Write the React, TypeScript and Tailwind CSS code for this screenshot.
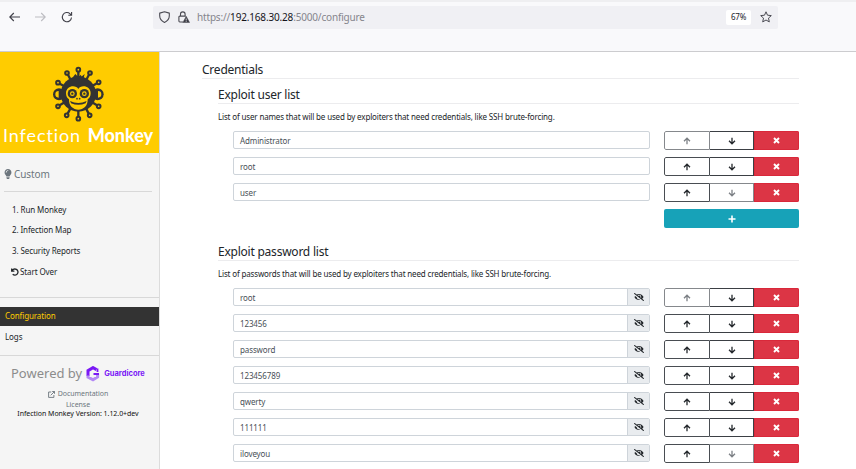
import type { ReactNode } from "react";
import { FaEyeSlash, FaLightbulb } from "react-icons/fa";

const users = ["Administrator", "root", "user"];
const passwords = ["root", "123456", "password", "123456789", "qwerty", "111111", "iloveyou"];

function Arrow({ down = false, dim = false }: { down?: boolean; dim?: boolean }) {
  return (
    <svg
      width="8"
      height="8"
      viewBox="0 0 8 8"
      fill="none"
      stroke={dim ? "#7b7f84" : "#23272b"}
      strokeWidth="1.3"
      className={down ? "rotate-180" : ""}
    >
      <path d="M4 7.3V1.2M1 4.2L4 1.2L7 4.2" />
    </svg>
  );
}

function RowButtons({ first, last }: { first: boolean; last: boolean }) {
  return (
    <div className="flex h-[19px] w-[135px] overflow-hidden rounded-[2px]">
      <div
        className={`flex w-[46px] items-center justify-center rounded-l-[2px] border ${first ? "border-[#85888c]" : "border-[#494d52]"}`}
      >
        <Arrow dim={first} />
      </div>
      <div
        className={`flex w-[44px] items-center justify-center border-y border-r ${last ? "border-[#85888c]" : "border-[#3b3f44]"}`}
      >
        <Arrow down dim={last} />
      </div>
      <div className="flex w-[45px] items-center justify-center border border-[#d9283a] bg-[#dc3545]">
        <svg width="7" height="7" viewBox="0 0 7 7" stroke="#fff" strokeWidth="1.9">
          <path d="M1 1L6 6M6 1L1 6" />
        </svg>
      </div>
    </div>
  );
}

function Row({ value, secret = false, first, last }: { value: string; secret?: boolean; first: boolean; last: boolean }) {
  return (
    <div className="flex h-[19px] justify-between">
      <div className="flex h-[18px] w-[417px] overflow-hidden rounded-[2px] border border-[#ced4da] bg-white">
        <div className="flex flex-1 items-center pt-px pl-[6px] text-[8px] tracking-[-0.12px] text-[#495057]">{value}</div>
        {secret && (
          <div className="flex w-[22px] items-center justify-center border-l border-[#ced4da] bg-[#e9ecef] text-[#212529]">
            <FaEyeSlash size={10} />
          </div>
        )}
      </div>
      <RowButtons first={first} last={last} />
    </div>
  );
}

function Heading({ children }: { children: ReactNode }) {
  return (
    <h2 className="h-[20px] border-b border-[#ececee] text-[12px] leading-[22px] tracking-[-0.23px] whitespace-nowrap text-[#212529]">
      {children}
    </h2>
  );
}

const spikes = [
  [85, 20],
  [51, 30],
  [120, 30],
  [24, 59],
  [146, 58],
  [24, 130],
  [146, 130],
  [50, 157],
  [119, 157],
  [85, 167],
];

function MonkeyLogo() {
  return (
    <svg width="60" height="60" viewBox="0 0 180 180" fill="#333333">
      <g stroke="#333333">
        {spikes.map(([x, y]) => (
          <g key={`${x}-${y}`}>
            <line x1={x} y1={y} x2="85" y2="93" strokeWidth="7" />
            <circle cx={x} cy={y} r="5.5" fill="#ffcc00" strokeWidth="6" />
          </g>
        ))}
      </g>
      <circle cx="27" cy="94" r="18" />
      <circle cx="143" cy="94" r="18" />
      <path d="M26 84a10 10 0 0 0 0 20zM144 84a10 10 0 0 1 0 20z" fill="#ffcc00" />
      <circle cx="85" cy="93" r="53" />
      <path d="M65 47L76 33L85 42L93 35L94 41L104 33L101 45z" />
      <path
        d="M85 78C79 65 48 66 48 91c0 9 4 14 9 18-1 20 13 31 28 31s29-11 28-31c5-4 9-9 9-18 0-25-31-26-37-13z"
        fill="#ffcc00"
      />
      <path d="M60 114q25 12 50 0-3 5-3 7-22 9-44 0 0-2-3-7z" />
      <circle cx="67" cy="92" r="14" />
      <circle cx="103" cy="92" r="14" />
      <circle cx="67" cy="92" r="7" fill="#ffcc00" />
      <circle cx="103" cy="92" r="7" fill="#ffcc00" />
      <circle cx="67" cy="92" r="3.5" />
      <circle cx="103" cy="92" r="3.5" />
      <circle cx="81" cy="107" r="2.5" />
      <circle cx="89" cy="107" r="2.5" />
    </svg>
  );
}

function BrowserBar() {
  return (
    <header className="h-[52px] border-t-2 border-b border-t-[#efeff1] border-b-[#cccccf] bg-[#f9f9fb]">
      <div className="flex h-[30px] items-center text-[#4a4a52]">
        <svg className="ml-[9px]" width="11" height="10" viewBox="0 0 11 10" fill="none" stroke="#3f3f48" strokeWidth="1.1">
          <path d="M11 5H.8M4.8 1L.8 5L4.8 9" />
        </svg>
        <svg className="ml-[15px]" width="11" height="10" viewBox="0 0 11 10" fill="none" stroke="#bdbdc2" strokeWidth="1.1">
          <path d="M0 5h10.2M6.2 1l4 4l-4 4" />
        </svg>
        <svg className="ml-[15px]" width="12" height="12" viewBox="0 0 12 12" fill="none" stroke="#3f3f48" strokeWidth="1.1">
          <path d="M10.5 6.5A4.6 4.6 0 1 1 9.1 2.8L10.4 4.2M10.6 1V4.3H7.3" />
        </svg>
        <div className="ml-[80px] flex h-[23px] w-[625px] items-center rounded-[2px] bg-[#f0f0f4]">
          <svg className="ml-[6px]" width="11" height="12" viewBox="0 0 11 12" fill="none" stroke="#4a4a52" strokeWidth="1.1">
            <path d="M5.5.7L10.3 2.1V4.8C10.3 8 8.2 10.2 5.5 11.4C2.8 10.2.7 8 .7 4.8V2.1z" strokeLinejoin="round" />
          </svg>
          <svg className="ml-[8px]" width="12" height="12" viewBox="0 0 12 12" fill="none" stroke="#4a4a52" strokeWidth="1.1">
            <path d="M2.5 5V3.2a2.3 2.3 0 0 1 4.6 0V5M5 11H1.8a.9.9 0 0 1-.9-.9V6a.9.9 0 0 1 .9-.9h6" />
            <path d="M8.2 5.3L11.6 11.5H4.9z" fill="#3b3b44" strokeWidth=".5" />
            <path d="M8.2 7.5v2M8.2 10v.8" stroke="#f0f0f4" strokeWidth=".8" />
          </svg>
          <div className="ml-[7px] pt-px text-[10px] tracking-[-0.17px] whitespace-nowrap text-[#85858c]">
            https://<span className="text-[#15141a]">192.168.30.28</span>:5000/configure
          </div>
          <div className="mr-[9px] ml-auto flex h-[15px] w-[25px] items-center justify-center rounded-[2px] bg-white text-[8px] tracking-[-0.2px] text-[#25252c]">
            67%
          </div>
          <svg className="mr-[6px]" width="12" height="12" viewBox="0 0 12 12" fill="none" stroke="#4a4a52" strokeLinejoin="round">
            <path d="M6 .8L7.5 4.2L11.3 4.6L8.5 7.1L9.3 10.9L6 9L2.7 10.9L3.5 7.1L.7 4.6L4.5 4.2z" />
          </svg>
        </div>
      </div>
    </header>
  );
}

function Sidebar() {
  return (
    <aside className="h-full w-[160px] shrink-0 border-r border-[#dcdcdc] bg-[#f5f5f5] text-[8px] tracking-[-0.1px] whitespace-nowrap text-[#212529]">
      <div className="flex h-[101px] flex-col bg-[#ffcc00] pt-[11px]">
        <div className="ml-[50px] h-[60px]">
          <MonkeyLogo />
        </div>
        <div className="mt-px ml-[3px] flex h-[23px] w-[150px] items-center justify-between font-[Lato,sans-serif] text-[18px] text-white">
          <span className="font-normal tracking-[0.05em]">Infection</span>
          <span className="font-black">Monkey</span>
        </div>
      </div>
      <div className="mr-[7px] ml-[4px] flex h-[39px] items-center border-b border-[#d8d8d8] pt-[4px] text-[10px] text-[#6c757d]">
        <FaLightbulb size={10} className="-ml-px" />
        <span className="ml-px">Custom</span>
      </div>
      <nav className="flex flex-col pt-[7px]">
        <div className="ml-[12px] h-[21px] leading-[21px]">1. Run Monkey</div>
        <div className="ml-[12px] h-[20px] leading-[20px]">2. Infection Map</div>
        <div className="ml-[12px] h-[21px] leading-[22px]">3. Security Reports</div>
        <div className="ml-[11px] flex h-[21px] items-center">
          <svg width="8" height="8" viewBox="0 0 8 8" fill="none" stroke="#212529" strokeWidth="1.3">
            <path d="M.7.5V3.2H3.4M1 3A3.1 3.1 0 1 1 1.7 6.3" />
          </svg>
          <span className="ml-px">Start Over</span>
        </div>
      </nav>
      <div className="mt-[15px] h-px bg-[#d8d8d8]" />
      <div className="mt-[9px] h-[19px] bg-[#333333] pl-[5px] leading-[18px] text-[#ffcc00]">Configuration</div>
      <div className="h-[30px] border-b border-[#d8d8d8] pl-[5px] leading-[22px]">Logs</div>
      <div className="mt-[9px] flex h-[18px] items-center pl-[11px]">
        <span className="text-[13px] tracking-normal text-[#8c8c8c]">Powered by</span>
        <svg className="ml-[4px]" width="14" height="16" viewBox="0 0 14 16" fill="none">
          <path d="M10.5 3.6L7 1.6L2 4.6V10" stroke="#7a18f5" strokeWidth="3" />
          <path d="M2 9.5V11L7 13.8L11.6 11V8" stroke="#b388f5" strokeWidth="3" />
          <path d="M11.5 2.5v3.5M7.5 8h5.5" stroke="#7a18f5" strokeWidth="1.8" />
        </svg>
        <span className="ml-[4px] font-[Inter,sans-serif] text-[7.5px] font-bold tracking-normal text-[#7a18f5]">
          Guardicore
        </span>
      </div>
      <div className="mt-[5px] mr-[3px] flex flex-col items-center text-[7px] tracking-[-0.04px] text-[#6c757d]">
        <div className="flex h-[12px] items-center">
          <svg width="7" height="7" viewBox="0 0 7 7" fill="none" stroke="#6c757d" strokeWidth=".9">
            <path d="M3.3 1H.6V6.4H5.9V4M4.2.5H6.5V2.8M6.5.5L2.7 4.3" />
          </svg>
          <span className="ml-[3px]">Documentation</span>
        </div>
        <div className="h-[9px] leading-[10px]">License</div>
        <div className="h-[9px] leading-[9px] text-[#111111]">Infection Monkey Version: 1.12.0+dev</div>
      </div>
    </aside>
  );
}

export default function App() {
  return (
    <div className="flex h-[469px] w-[856px] flex-col overflow-hidden bg-white font-['Noto_Sans',sans-serif]">
      <BrowserBar />
      <div className="flex min-h-0 flex-1">
        <Sidebar />
        <main className="ml-[42px] w-[597px] shrink-0 overflow-hidden pt-[7px]">
          <Heading>Credentials</Heading>
          <section className="ml-[16px] pt-[5px]">
            <Heading>Exploit user list</Heading>
            <p className="mt-[5px] h-[16px] text-[8px] leading-[16px] tracking-[-0.155px] whitespace-nowrap text-[#212529]">
              List of user names that will be used by exploiters that need credentials, like SSH brute-forcing.
            </p>
            <div className="mt-[6px] ml-[15px] flex flex-col gap-[7px]">
              {users.map((u, i) => (
                <Row key={u} value={u} first={i === 0} last={i === users.length - 1} />
              ))}
              <div className="flex h-[19px] w-[135px] items-center justify-center self-end rounded-[2px] bg-[#17a2b8]">
                <svg width="8" height="8" viewBox="0 0 8 8" stroke="#fff" strokeWidth="1.6">
                  <path d="M4 .5V7.5M.5 4H7.5" />
                </svg>
              </div>
            </div>
          </section>
          <section className="ml-[16px] pt-[13px]">
            <Heading>Exploit password list</Heading>
            <p className="mt-[5px] h-[16px] text-[8px] leading-[16px] tracking-[-0.155px] whitespace-nowrap text-[#212529]">
              List of passwords that will be used by exploiters that need credentials, like SSH brute-forcing.
            </p>
            <div className="mt-[6px] ml-[15px] flex flex-col gap-[7px]">
              {passwords.map((p, i) => (
                <Row key={p} value={p} secret first={i === 0} last={i === passwords.length - 1} />
              ))}
            </div>
          </section>
        </main>
      </div>
    </div>
  );
}
